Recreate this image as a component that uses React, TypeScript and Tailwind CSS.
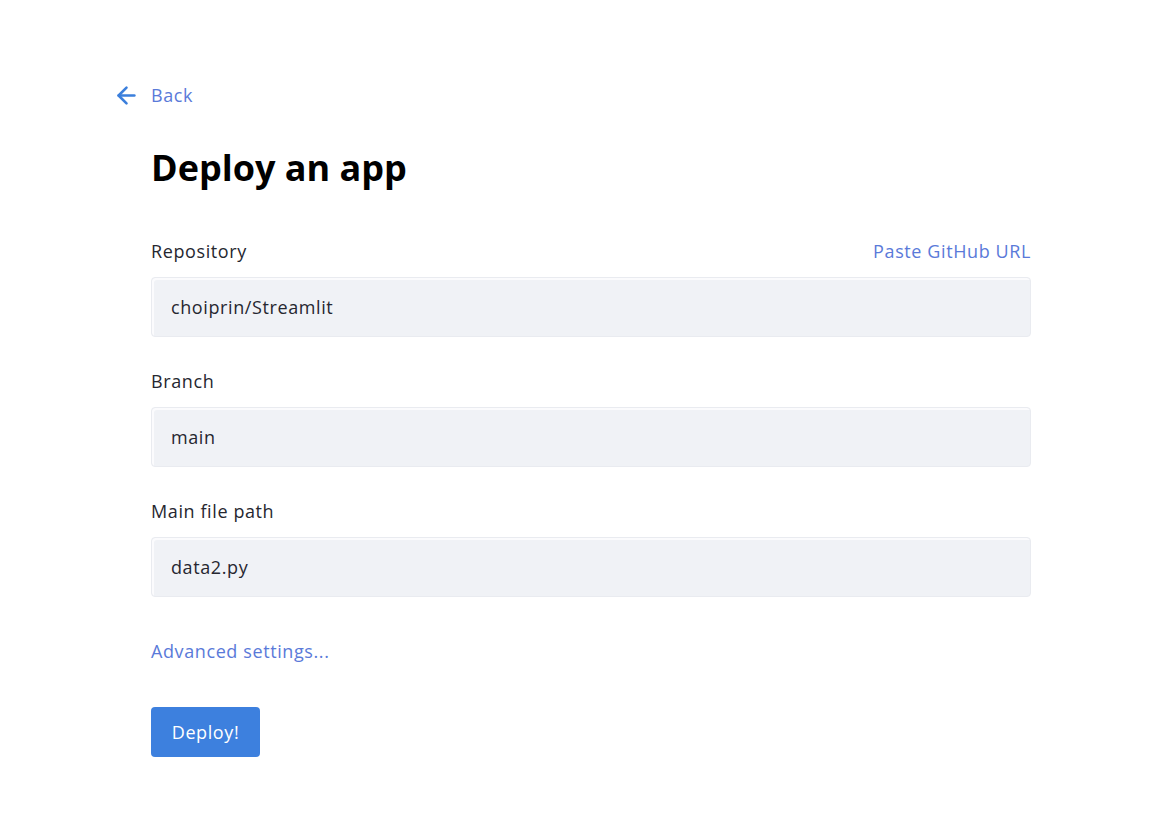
import { ArrowLeft } from 'lucide-react';

const fields = [
    { label: 'Repository', value: 'choiprin/Streamlit', extra: 'Paste GitHub URL' },
    { label: 'Branch', value: 'main' },
    { label: 'Main file path', value: 'data2.py' },
];

function Field({ label, value, extra }: { label: string; value: string; extra?: string }) {
    return (
        <div className="flex flex-col">
            <div className="flex h-[26px] items-center justify-between leading-[26px]">
                <span className="text-[18px] text-[#262730]">{label}</span>
                {extra && <a className="cursor-pointer text-[18px] text-[#5a7ad9]">{extra}</a>}
            </div>
            <div className="mt-[13px] flex h-[60px] items-center rounded-[4px] border border-[#e9ebf0] bg-[#f0f2f6] px-[19px] text-[18px] text-[#262730] shadow-[inset_2px_2px_0_#fbfbfd]">
                {value}
            </div>
        </div>
    );
}

export default function App() {
    return (
        <div className="min-h-screen bg-white pt-[83px] font-['Open_Sans',sans-serif] tracking-[0.6px]">
            <div className="ml-[113px] flex h-[24px] items-center gap-[11px]">
                <ArrowLeft className="h-[27px] w-[27px] text-[#3b7fdc]" strokeWidth={2.3} />
                <span className="text-[18px] leading-[24px] text-[#5a7ad9]">Back</span>
            </div>
            <div className="ml-[151px] w-[880px]">
                <h1 className="mt-[39px] text-[36px] font-bold leading-[44px] tracking-normal text-black">Deploy an app</h1>
                <div className="mt-[48px] flex flex-col gap-[31px]">
                    {fields.map((f) => (
                        <Field key={f.label} {...f} />
                    ))}
                </div>
                <div className="mt-[41px] h-[26px] text-[18px] leading-[26px] text-[#5a7ad9]">Advanced settings...</div>
                <button className="mt-[43px] h-[50px] w-[109px] rounded-[4px] bg-[#3d80de] text-[18px] text-white">
                    Deploy!
                </button>
            </div>
        </div>
    );
}
